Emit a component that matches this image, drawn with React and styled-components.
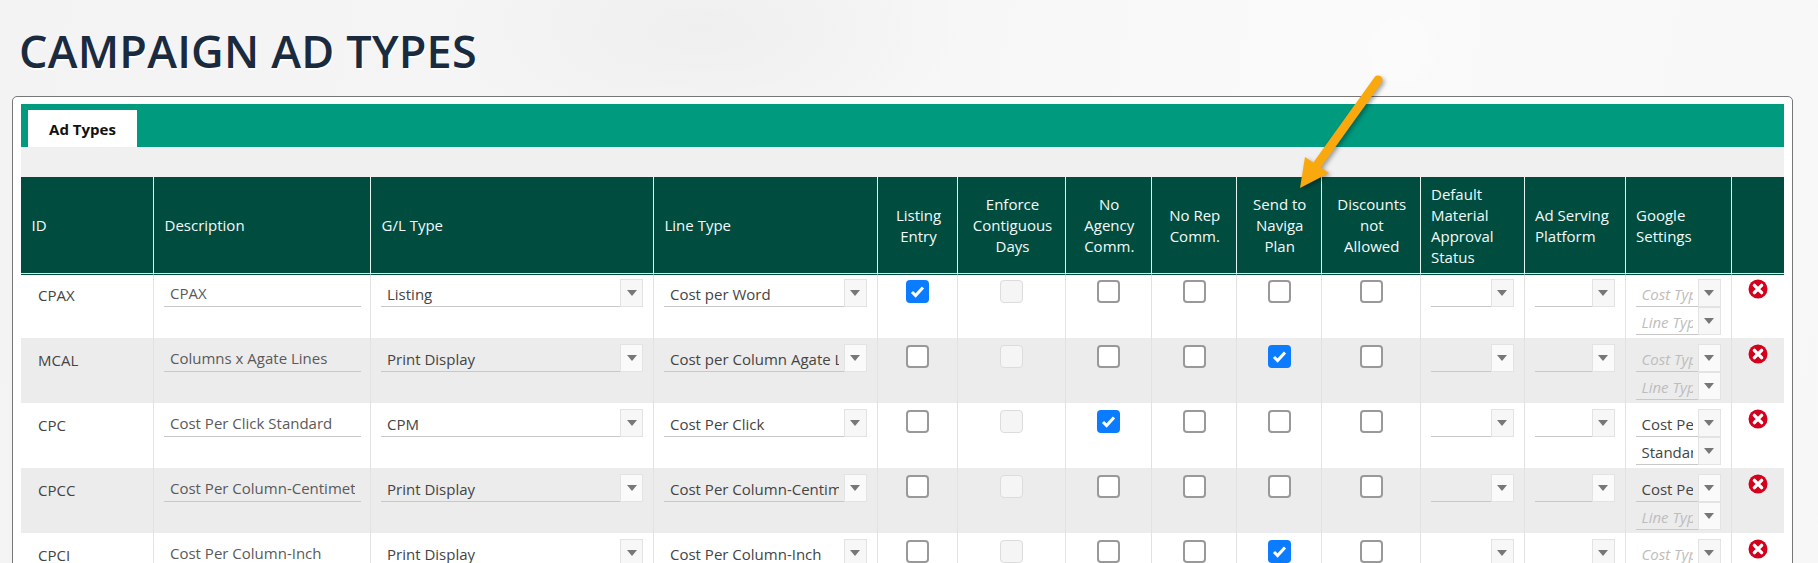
import React from 'react';
import styled, { createGlobalStyle } from 'styled-components';

const GlobalStyle = createGlobalStyle`
  html, body {
    margin: 0;
    height: 563px;
    overflow: hidden;
  }
  body {
    font-family: "Open Sans", "Noto Sans", "Liberation Sans", sans-serif;
    background:
      radial-gradient(circle at 1400px 50px, #fbfbfb 0, #fbfbfb 24px, rgba(251,251,251,0) 40px),
      radial-gradient(ellipse at 700px 30px, rgba(236,236,236,0.7) 0, rgba(236,236,236,0) 260px),
      linear-gradient(100deg, #f3f3f3 0%, #f6f6f6 45%, #fafafa 70%, #f7f7f7 100%);
  }
`;

const Page = styled.div`
  position: relative;
  height: 563px;
  overflow: hidden;
`;

const Title = styled.h1`
  margin: 0;
  padding: 23px 0 0 19px;
  height: 72px;
  box-sizing: border-box;
  font-size: 45px;
  line-height: 56px;
  font-weight: 600;
  letter-spacing: 0.2px;
  color: #1a2b3f;
  text-shadow: 1px 2px 0 #fff;
  white-space: nowrap;
`;

const Panel = styled.div`
  margin: 24px 0 0 12px;
  width: 1781px;
  height: 600px;
  box-sizing: border-box;
  padding: 7px 8px 0 8px;
  background: #fff;
  border: 1px solid #777;
  border-radius: 5px;
`;

const TabBar = styled.div`
  height: 43px;
  box-sizing: border-box;
  padding: 6px 0 0 7px;
  background: #009a7f;
`;

const Tab = styled.div`
  width: 109px;
  height: 37px;
  font-size: 15px;
  font-weight: 700;
  line-height: 38px;
  text-align: center;
  color: #111;
  background: #fff;
`;

const Band = styled.div`
  height: 30px;
  background: #f0f0f0;
`;

const Table = styled.table`
  width: 1762.5px;
  table-layout: fixed;
  border-collapse: separate;
  border-spacing: 0;
`;

const HeadCell = styled.th`
  height: 98px;
  box-sizing: border-box;
  padding: 0 8px 0 10.5px;
  background: #004d40;
  color: #f4faf8;
  font-size: 15px;
  font-weight: 400;
  line-height: 21px;
  text-align: ${(p) => (p.$center ? 'center' : 'left')};
  border-right: 1px solid #e8f2ef;
  border-bottom: 1px solid #004d40;
  box-shadow: inset 0 -1px 0 #d8ebe6;

  &:last-child {
    border-right: 0;
  }
`;

const Row = styled.tr`
  background: ${(p) => (p.$alt ? '#ececec' : '#fff')};
`;

const Cell = styled.td`
  height: 65px;
  box-sizing: border-box;
  padding: 6px 9px 0 10px;
  vertical-align: top;
  overflow: hidden;
  border-right: 1px solid #e2e2e2;
  text-align: ${(p) => (p.$center ? 'center' : 'left')};

  tr:first-child > & {
    height: 63px;
    padding-top: 4px;
  }

  &:last-child {
    border-right: 0;
  }
`;

const IdText = styled.div`
  padding: 6px 0 0 7px;
  font-size: 15px;
  line-height: 20px;
  color: #444;
`;

const TextInput = styled.div`
  height: 28px;
  box-sizing: border-box;
  padding: 4px 6px 0;
  font-size: 15px;
  line-height: 20px;
  color: #5a5a5a;
  border-bottom: 1px solid #c8c8c8;
`;

const SelectBox = styled.div`
  display: flex;
  height: 28px;
  margin-right: 1px;
`;

const SelectValue = styled.div`
  flex: 1;
  min-width: 0;
  box-sizing: border-box;
  padding: 5px 5px 0 6px;
  font-size: 15px;
  line-height: 20px;
  font-style: ${(p) => (p.$placeholder ? 'italic' : 'normal')};
  color: ${(p) => (p.$placeholder ? '#bdbdbd' : '#444')};
  border-bottom: 1px solid #c8c8c8;
`;

const Clip = styled.div`
  white-space: nowrap;
  overflow: hidden;
`;

const SelectButton = styled.div`
  flex: none;
  display: flex;
  align-items: center;
  justify-content: center;
  width: 23px;
  box-sizing: border-box;
  background: ${(p) => (p.$alt ? '#fafafa' : '#f7f7f7')};
  border: 1px solid #e3e3e3;
`;

const Caret = styled.span`
  width: 0;
  height: 0;
  border-style: solid;
  border-width: 6px 5px 0;
  border-color: #777 transparent transparent;
`;

const Box = styled.span`
  display: inline-flex;
  align-items: center;
  justify-content: center;
  width: 23px;
  height: 23px;
  margin-top: 1px;
  box-sizing: border-box;
  border-radius: 4px;
  border: ${(p) => (p.$checked ? '0' : p.$disabled ? '1.5px solid #dcdcdc' : '2px solid #999')};
  background: ${(p) => (p.$checked ? '#0b7bff' : p.$disabled ? '#f5f5f5' : '#fff')};
`;

const DeleteButton = styled.span`
  display: block;
  width: 20px;
  height: 20px;
  margin: 0 auto;
`;

const ArrowLayer = styled.svg`
  position: absolute;
  left: 1290px;
  top: 70px;
  filter: drop-shadow(2px 2px 2px rgba(0, 0, 0, 0.35));
`;

const columns = [
  { label: 'ID', width: 133 },
  { label: 'Description', width: 217 },
  { label: 'G/L Type', width: 283 },
  { label: 'Line Type', width: 223.5 },
  { label: ['Listing', 'Entry'], width: 80.5, center: true },
  { label: ['Enforce', 'Contiguous', 'Days'], width: 107.5, center: true },
  { label: ['No', 'Agency', 'Comm.'], width: 86, center: true },
  { label: ['No Rep', 'Comm.'], width: 85, center: true },
  { label: ['Send to', 'Naviga', 'Plan'], width: 85, center: true },
  { label: ['Discounts', 'not', 'Allowed'], width: 99, center: true },
  { label: ['Default', 'Material', 'Approval', 'Status'], width: 104 },
  { label: ['Ad Serving', 'Platform'], width: 101 },
  { label: ['Google', 'Settings'], width: 106 },
  { label: '', width: 52 },
];

const rows = [
  { id: 'CPAX', desc: 'CPAX', gl: 'Listing', line: 'Cost per Word', listing: true },
  { id: 'MCAL', desc: 'Columns x Agate Lines', gl: 'Print Display', line: 'Cost per Column Agate Lines', send: true },
  { id: 'CPC', desc: 'Cost Per Click Standard', gl: 'CPM', line: 'Cost Per Click', agency: true, cost: 'Cost Per Click', lineType: 'Standard' },
  { id: 'CPCC', desc: 'Cost Per Column-Centimeter', gl: 'Print Display', line: 'Cost Per Column-Centimeter', cost: 'Cost Per Click' },
  { id: 'CPCI', desc: 'Cost Per Column-Inch', gl: 'Print Display', line: 'Cost Per Column-Inch', send: true },
];

function Select({ value, placeholder, alt }) {
  return (
    <SelectBox>
      <SelectValue $placeholder={!value && !!placeholder}>
        <Clip>{value || placeholder}</Clip>
      </SelectValue>
      <SelectButton $alt={alt}>
        <Caret />
      </SelectButton>
    </SelectBox>
  );
}

function Check({ checked, disabled }) {
  return (
    <Box $checked={checked} $disabled={disabled}>
      {checked && (
        <svg width="15" height="13" viewBox="0 0 15 13">
          <path d="M2 7l3.6 3.6L13 2.4" fill="none" stroke="#fff" strokeWidth="3" />
        </svg>
      )}
    </Box>
  );
}

function DeleteIcon() {
  return (
    <DeleteButton>
      <svg width="20" height="20" viewBox="0 0 20 20">
        <circle cx="10" cy="10" r="9.5" fill="#d3011c" />
        <path d="M6.4 6.4l7.2 7.2M13.6 6.4l-7.2 7.2" stroke="#fff" strokeWidth="3.4" strokeLinecap="round" />
      </svg>
    </DeleteButton>
  );
}

function App() {
  return (
    <Page>
      <GlobalStyle />
      <Title>CAMPAIGN AD TYPES</Title>
      <Panel>
        <TabBar>
          <Tab>Ad Types</Tab>
        </TabBar>
        <Band />
        <Table>
          <colgroup>
            {columns.map((c, i) => (
              <col key={i} style={{ width: c.width }} />
            ))}
          </colgroup>
          <thead>
            <tr>
              {columns.map((c, i) => (
                <HeadCell key={i} $center={c.center}>
                  {[].concat(c.label).map((t, j) => (
                    <div key={j}>{t}</div>
                  ))}
                </HeadCell>
              ))}
            </tr>
          </thead>
          <tbody>
            {rows.map((r, i) => {
              const alt = i % 2 === 1;
              return (
                <Row key={r.id} $alt={alt}>
                  <Cell><IdText>{r.id}</IdText></Cell>
                  <Cell><TextInput><Clip>{r.desc}</Clip></TextInput></Cell>
                  <Cell><Select value={r.gl} alt={alt} /></Cell>
                  <Cell><Select value={r.line} alt={alt} /></Cell>
                  <Cell $center><Check checked={r.listing} /></Cell>
                  <Cell $center><Check disabled /></Cell>
                  <Cell $center><Check checked={r.agency} /></Cell>
                  <Cell $center><Check /></Cell>
                  <Cell $center><Check checked={r.send} /></Cell>
                  <Cell $center><Check /></Cell>
                  <Cell><Select alt={alt} /></Cell>
                  <Cell><Select alt={alt} /></Cell>
                  <Cell>
                    <Select value={r.cost} placeholder="Cost Type" alt={alt} />
                    <Select value={r.lineType} placeholder="Line Type" alt={alt} />
                  </Cell>
                  <Cell><DeleteIcon /></Cell>
                </Row>
              );
            })}
          </tbody>
        </Table>
      </Panel>
      <ArrowLayer width="100" height="130" viewBox="1290 70 100 130">
        <path d="M1378 80L1317 165" stroke="#f9a90e" strokeWidth="9" strokeLinecap="round" fill="none" />
        <path d="M1300 188L1305 157L1329 173Z" fill="#f9a90e" />
      </ArrowLayer>
    </Page>
  );
}

export default App;
